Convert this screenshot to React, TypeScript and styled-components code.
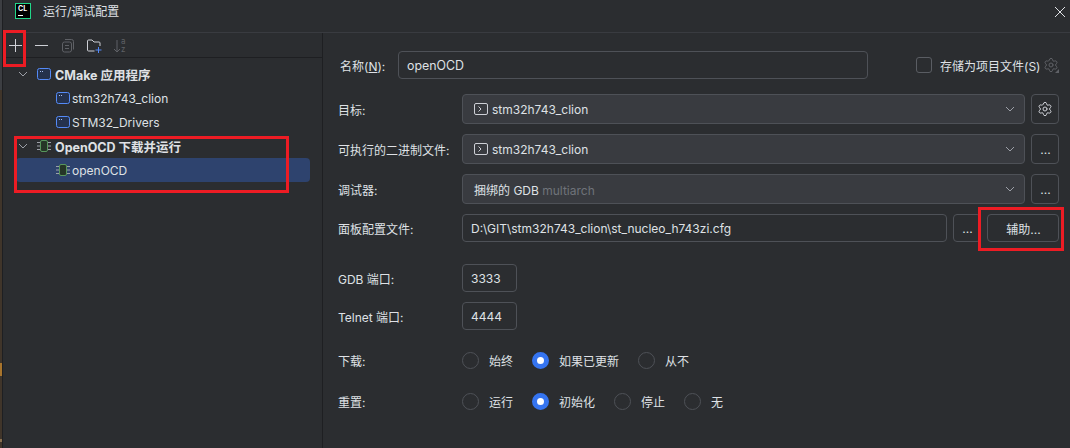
import { createGlobalStyle, styled } from 'styled-components';
import { Settings } from 'lucide-react';
import type { ReactNode } from 'react';

const GlobalStyle = createGlobalStyle`
  html, body { margin: 0; padding: 0; background: #2b2d30; }
  body {
    width: 1070px;
    height: 448px;
    overflow: hidden;
    color: #dfe1e5;
    font-family: Inter, "Noto Sans CJK SC", sans-serif;
    font-size: 12px;
  }
  * { box-sizing: border-box; }
`;

const Dialog = styled.div`
  position: relative;
  width: 1070px;
  height: 448px;
  display: flex;
  background: #2b2d30;
`;

// the bit of the editor window that shows behind the dialog
const BehindEdge = styled.div`
  width: 3px;
  flex: none;
  border-right: 1px solid #1e1f22;
  background: linear-gradient(
    #3c3e42 0 90px,
    #40352a 90px 363px,
    #a8742c 363px 376px,
    #40352a 376px 439px,
    #8a7050 439px 442px,
    #40352a 442px
  );
`;

const Window = styled.div`
  flex: 1;
  display: flex;
  flex-direction: column;
  min-width: 0;
`;

const TitleBar = styled.header`
  height: 33px;
  flex: none;
  display: flex;
  align-items: flex-start;
  padding: 3px 2px 0 12px;
  border-bottom: 1px solid #393b40;
`;

const AppLogo = styled.div`
  width: 16px;
  height: 16px;
  flex: none;
  background: #000;
  border: 1px solid #21d789;
  color: #fff;
  font-size: 7px;
  font-weight: 700;
  line-height: 8px;
  padding: 1px 0 0 2px;
  &::after {
    content: '';
    display: block;
    width: 5px;
    height: 1px;
    margin-top: 2px;
    background: #fff;
  }
`;

const Title = styled.span`
  margin-left: 12px;
  flex: 1;
  line-height: 17px;
`;

const CloseIcon = styled.svg`
  width: 16px;
  height: 16px;
  margin-top: 1px;
  fill: none;
  stroke: #dfe1e5;
`;

const Body = styled.div`
  flex: 1;
  display: flex;
  min-height: 0;
`;

const Sidebar = styled.aside`
  width: 320px;
  flex: none;
  border-right: 1px solid #1e1f22;
`;

const Toolbar = styled.div`
  height: 25px;
  display: flex;
  align-items: center;
  gap: 8px;
  padding-left: 3px;
  border-bottom: 1px solid #1e1f22;
`;

const ToolIcon = styled.svg<{ $dim?: boolean }>`
  width: 18px;
  height: 18px;
  fill: none;
  stroke: ${p => (p.$dim ? '#5f6166' : '#ced0d6')};
  stroke-width: 1;
`;

const SortLetter = styled.text`
  fill: #5f6166;
  stroke: none;
  font-size: 8px;
`;

const Tree = styled.div`
  padding-top: 4px;
`;

const TreeRow = styled.div<{ $depth?: number; $selected?: boolean; $bold?: boolean }>`
  position: relative;
  height: 24px;
  margin: 0 12px 0 13px;
  padding-left: ${p => (p.$depth ? 40 : 21)}px;
  display: flex;
  align-items: center;
  gap: ${p => (p.$bold ? 4 : 2)}px;
  border-radius: 4px;
  font-size: ${p => (p.$bold ? 12.5 : 12)}px;
  font-weight: ${p => (p.$bold ? 700 : 400)};
  background: ${p => (p.$selected ? '#2e436e' : 'transparent')};
`;

const Chevron = styled.svg`
  position: absolute;
  left: 2px;
  top: 7px;
  width: 10px;
  height: 10px;
  fill: none;
  stroke: #9da0a8;
`;

const Form = styled.main`
  flex: 1;
  padding: 18px 12px 0 15px;
`;

const Row = styled.div<{ $top?: number }>`
  display: flex;
  align-items: center;
  gap: 6px;
  margin-top: ${p => p.$top ?? 10}px;
`;

const Label = styled.label<{ $width?: number }>`
  flex: none;
  width: ${p => p.$width ?? 118}px;
  white-space: nowrap;
`;

const NameLabel = styled(Label)`
  padding-left: 2px;
`;

const TextInput = styled.div<{ $width?: number; $size?: number }>`
  flex: ${p => (p.$width ? 'none' : 1)};
  width: ${p => (p.$width ? `${p.$width}px` : 'auto')};
  height: 28px;
  display: flex;
  align-items: center;
  padding: 0 8px;
  font-size: ${p => p.$size ?? 12}px;
  border: 1px solid #4e5157;
  border-radius: 4px;
`;

const Select = styled.div`
  flex: 1;
  height: 30px;
  display: flex;
  align-items: center;
  gap: 4px;
  padding: 0 9px 0 11px;
  background: #393b40;
  border: 1px solid #4e5157;
  border-radius: 4px;
`;

const SelectValue = styled.span`
  flex: 1;
`;

const Muted = styled.span`
  color: #6f737a;
`;

const Square = styled.button<{ $height?: number }>`
  flex: none;
  width: 28px;
  height: ${p => p.$height ?? 30}px;
  padding: 0;
  display: flex;
  align-items: center;
  justify-content: center;
  background: none;
  border: 1px solid #4e5157;
  border-radius: 4px;
  color: #dfe1e5;
  font: inherit;
`;

const Helper = styled(Square)`
  width: 72px;
`;

const SaveArea = styled.div`
  display: flex;
  align-items: center;
  margin-left: 42px;
  white-space: nowrap;
`;

const Checkbox = styled.span`
  width: 16px;
  height: 16px;
  margin-right: 8px;
  border: 1px solid #5a5d63;
  border-radius: 3px;
`;

const SaveGear = styled.span`
  position: relative;
  display: flex;
  margin-left: 3px;
  &::after {
    content: '';
    position: absolute;
    right: 0;
    bottom: 0;
    border: 2px solid transparent;
    border-right-color: #5f6166;
    border-bottom-color: #5f6166;
  }
`;

const RadioGroup = styled.div`
  display: flex;
  align-items: center;
  height: 21px;
  gap: 19px;
`;

const RadioOption = styled.div`
  display: flex;
  align-items: center;
  gap: 10px;
`;

const RadioMark = styled.span<{ $on?: boolean }>`
  width: 17px;
  height: 17px;
  border-radius: 50%;
  border: ${p => (p.$on ? '5px solid #3574f0' : '1px solid #4e5157')};
  background: ${p => (p.$on ? '#fff' : 'transparent')};
`;

const Highlight = styled.div<{ $x: number; $y: number; $w: number; $h: number }>`
  position: absolute;
  left: ${p => p.$x}px;
  top: ${p => p.$y}px;
  width: ${p => p.$w}px;
  height: ${p => p.$h}px;
  border: 3px solid #ed1c24;
  pointer-events: none;
`;

const AppIcon = () => (
  <svg width="14" height="14" viewBox="0 0 14 14" fill="#25324d" stroke="#548af7">
    <rect x="0.5" y="1.5" width="13" height="11" rx="2" />
    <path d="M3 4.500h1M5 4.500h1" stroke="#a8c0f0" />
  </svg>
);

const ChipIcon = () => (
  <svg width="14" height="14" viewBox="0 0 14 14" fill="none">
    <path d="M0 3.500h3M0 7h3M0 10.500h3M11 3.500h3M11 7h3M11 10.500h3" stroke="#9da0a8" />
    <rect x="3.500" y="1.500" width="7" height="11" rx="1.500" fill="#253627" stroke="#57965c" />
  </svg>
);

const TerminalIcon = () => (
  <svg width="14" height="12" viewBox="0 0 14 12" fill="none" stroke="#ced0d6">
    <rect x="0.500" y="0.500" width="13" height="11" rx="1.500" />
    <path d="M4.500 3.500 7 6 4.500 8.500" />
  </svg>
);

const SelectArrow = () => (
  <svg width="10" height="10" viewBox="0 0 10 10" fill="none" stroke="#9da0a8">
    <path d="M1 3l4 4 4-4" />
  </svg>
);

const Radio = ({ on, children }: { on?: boolean; children: ReactNode }) => (
  <RadioOption>
    <RadioMark $on={on} />
    {children}
  </RadioOption>
);

const TreeChevron = () => (
  <Chevron viewBox="0 0 10 10">
    <path d="M1 3l4 4 4-4" />
  </Chevron>
);

export default function App() {
  return (
    <Dialog>
      <GlobalStyle />
      <BehindEdge />
      <Window>
        <TitleBar>
          <AppLogo>CL</AppLogo>
          <Title>运行/调试配置</Title>
          <CloseIcon viewBox="0 0 16 16">
            <path d="M3 3l10 10M13 3L3 13" />
          </CloseIcon>
        </TitleBar>
        <Body>
          <Sidebar>
            <Toolbar>
              <ToolIcon viewBox="0 0 18 18">
                <path d="M9.500 3v13M3 9.500h13" />
              </ToolIcon>
              <ToolIcon viewBox="0 0 18 18">
                <path d="M3 9.500h13" />
              </ToolIcon>
              <ToolIcon viewBox="0 0 18 18" $dim>
                <rect x="4.500" y="6" width="9" height="10" rx="2" />
                <path d="M7 9.500h4M7 12.500h4M7 3.500h6.500a2 2 0 0 1 2 2v8" />
              </ToolIcon>
              <ToolIcon viewBox="0 0 18 18">
                <path d="M3.500 14V5a1 1 0 0 1 1-1h3.500l2 2h5a1 1 0 0 1 1 1v3M3.500 14a1 1 0 0 0 1 1h6" />
                <path d="M14.500 11v6M11.500 14h6" stroke="#548af7" />
              </ToolIcon>
              <ToolIcon viewBox="0 0 18 18" $dim>
                <path d="M7 4v12M4 13l3 3 3-3" />
                <SortLetter x="11" y="8">a</SortLetter>
                <SortLetter x="11" y="16">z</SortLetter>
              </ToolIcon>
            </Toolbar>
            <Tree>
              <TreeRow $bold>
                <TreeChevron />
                <AppIcon />
                CMake 应用程序
              </TreeRow>
              <TreeRow $depth={1}>
                <AppIcon />
                stm32h743_clion
              </TreeRow>
              <TreeRow $depth={1}>
                <AppIcon />
                STM32_Drivers
              </TreeRow>
              <TreeRow $bold>
                <TreeChevron />
                <ChipIcon />
                OpenOCD 下载并运行
              </TreeRow>
              <TreeRow $depth={1} $selected>
                <ChipIcon />
                openOCD
              </TreeRow>
            </Tree>
          </Sidebar>
          <Form>
            <Row $top={0}>
              <NameLabel $width={54}>
                名称(<u>N</u>):
              </NameLabel>
              <TextInput $width={470} $size={12.4}>openOCD</TextInput>
              <SaveArea>
                <Checkbox />
                存储为项目文件(S)
                <SaveGear>
                  <Settings size={16} color="#5f6166" strokeWidth={1.5} />
                </SaveGear>
              </SaveArea>
            </Row>
            <Row $top={15}>
              <Label>目标:</Label>
              <Select>
                <TerminalIcon />
                <SelectValue>stm32h743_clion</SelectValue>
                <SelectArrow />
              </Select>
              <Square>
                <Settings size={16} color="#ced0d6" strokeWidth={1.5} />
              </Square>
            </Row>
            <Row>
              <Label>可执行的二进制文件:</Label>
              <Select>
                <TerminalIcon />
                <SelectValue>stm32h743_clion</SelectValue>
                <SelectArrow />
              </Select>
              <Square>...</Square>
            </Row>
            <Row>
              <Label>调试器:</Label>
              <Select>
                <SelectValue>
                  捆绑的 GDB <Muted>multiarch</Muted>
                </SelectValue>
                <SelectArrow />
              </Select>
              <Square>...</Square>
            </Row>
            <Row>
              <Label>面板配置文件:</Label>
              <TextInput>D:\GIT\stm32h743_clion\st_nucleo_h743zi.cfg</TextInput>
              <Square $height={28}>...</Square>
              <Helper $height={28}>辅助...</Helper>
            </Row>
            <Row $top={22}>
              <Label>GDB 端口:</Label>
              <TextInput $width={55}>3333</TextInput>
            </Row>
            <Row>
              <Label>Telnet 端口:</Label>
              <TextInput $width={55}>4444</TextInput>
            </Row>
            <Row $top={20}>
              <Label>下载:</Label>
              <RadioGroup>
                <Radio>始终</Radio>
                <Radio on>如果已更新</Radio>
                <Radio>从不</Radio>
              </RadioGroup>
            </Row>
            <Row $top={20}>
              <Label>重置:</Label>
              <RadioGroup>
                <Radio>运行</Radio>
                <Radio on>初始化</Radio>
                <Radio>停止</Radio>
                <Radio>无</Radio>
              </RadioGroup>
            </Row>
          </Form>
        </Body>
      </Window>
      <Highlight $x={3} $y={30} $w={23} $h={37} />
      <Highlight $x={14} $y={136} $w={275} $h={57} />
      <Highlight $x={978} $y={207} $w={86} $h={44} />
    </Dialog>
  );
}
